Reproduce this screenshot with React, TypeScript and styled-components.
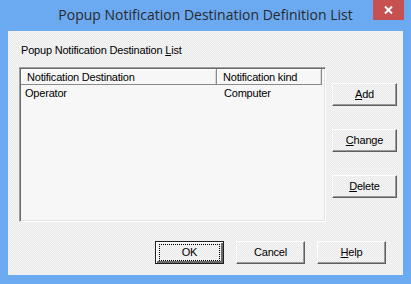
import React from "react";
import styled, { createGlobalStyle, css } from "styled-components";

const Global = createGlobalStyle`
  html, body { margin: 0; padding: 0; }
  body { width: 411px; height: 284px; overflow: hidden; background: #6ba9f1; }
`;

const dither = css`
  background-color: #f0f0f0;
  background-image: repeating-conic-gradient(#f5f5f5 0 25%, #eaeaea 0 50%);
  background-size: 2px 2px;
`;

const uiFont = css`
  font-family: "Liberation Sans", Arial, sans-serif;
  font-size: 11px;
  letter-spacing: -0.2px;
  color: #000;
`;

const Window = styled.div`
  width: 411px;
  height: 284px;
  box-sizing: border-box;
  background: #6ba9f1;
  display: flex;
  flex-direction: column;
  padding: 0 8px 9px 8px;
`;

const TitleBar = styled.div`
  height: 31px;
  margin: 0 -8px;
  display: grid;
  grid-template-columns: 1fr auto 1fr;
`;

const Title = styled.div`
  grid-column: 2;
  font-family: "Open Sans", "Noto Sans", sans-serif;
  font-size: 14px;
  line-height: 20px;
  padding-top: 5px;
  color: #2a2a2a;
  white-space: nowrap;
`;

const CloseButton = styled.div`
  grid-column: 3;
  justify-self: end;
  align-self: start;
  width: 31px;
  height: 20px;
  margin-right: 7px;
  background: #c75050;
  display: flex;
  align-items: center;
  justify-content: center;
`;

const Client = styled.div`
  flex: 1;
  ${dither};
  display: flex;
  flex-direction: column;
  padding: 13px 6px 11px 11px;
`;

const GroupLabel = styled.div`
  ${uiFont};
  line-height: 13px;
  margin: 0 0 10px 2px;
`;

const Key = styled.span`
  text-decoration: underline;
  text-underline-offset: 1px;
`;

const MainRow = styled.div`
  display: flex;
  gap: 6px;
  height: 155px;
`;

const ListBox = styled.div`
  width: 307px;
  height: 155px;
  box-sizing: border-box;
  border: 1px solid;
  border-color: #a0a0a0 #ffffff #ffffff #a0a0a0;
  box-shadow: inset 1px 1px #696969, inset -1px -1px #e3e3e3;
  background: #f7f7f7;
  padding: 1px;
`;

const Columns = styled.div`
  display: grid;
  grid-template-columns: 196px 105px;
`;

const HeaderCell = styled.div`
  ${uiFont};
  height: 16px;
  box-sizing: border-box;
  line-height: 15px;
  padding: 1px 0 0 6px;
  border-right: 1px solid #8a8a8a;
  border-bottom: 1px solid #8a8a8a;
  box-shadow: inset 1px 1px #ffffff, inset -1px 0 #d8d8d8;
  white-space: nowrap;
`;

const Cell = styled.div<{ $pad: number }>`
  ${uiFont};
  height: 15px;
  line-height: 15px;
  padding: 1px 0 0 ${(p) => p.$pad}px;
  white-space: nowrap;
`;

const SideButtons = styled.div`
  display: flex;
  flex-direction: column;
  gap: 23px;
  padding-top: 16px;
`;

const Button = styled.button<{ $w: number; $default?: boolean }>`
  ${uiFont};
  ${dither};
  width: ${(p) => p.$w}px;
  height: 23px;
  box-sizing: border-box;
  padding: 0;
  margin: 0;
  position: relative;
  border: 1px solid;
  border-color: ${(p) =>
    p.$default ? "#1e1e1e" : "#ffffff #5f5f5f #5f5f5f #ffffff"};
  box-shadow: ${(p) =>
    p.$default
      ? "inset 1px 1px #ffffff, inset -2px -2px #6a6a6a"
      : "inset -1px -1px #9a9a9a"};
  display: flex;
  align-items: center;
  justify-content: center;
  line-height: 13px;
  cursor: default;
`;

const FocusRect = styled.span`
  position: absolute;
  left: 3px;
  top: 2px;
  right: 3px;
  bottom: 2px;
  border: 1px dotted #000;
  pointer-events: none;
`;

const BottomRow = styled.div`
  display: flex;
  justify-content: flex-end;
  gap: 12px;
  margin-top: 19px;
  padding-right: 11px;
`;

export default function App() {
  return (
    <>
      <Global />
      <Window>
        <TitleBar>
          <Title>Popup Notification Destination Definition List</Title>
          <CloseButton>
            <svg width="9" height="8" viewBox="0 0 9 8">
              <path d="M1 0.5 L8 7.5 M8 0.5 L1 7.5" stroke="#fff" strokeWidth="2" />
            </svg>
          </CloseButton>
        </TitleBar>
        <Client>
          <GroupLabel>
            Popup Notification Destination <Key>L</Key>ist
          </GroupLabel>
          <MainRow>
            <ListBox>
              <Columns>
                <HeaderCell>Notification Destination</HeaderCell>
                <HeaderCell>Notification kind</HeaderCell>
                <Cell $pad={4}>Operator</Cell>
                <Cell $pad={7}>Computer</Cell>
              </Columns>
            </ListBox>
            <SideButtons>
              <Button $w={65}>
                <span>
                  <Key>A</Key>dd
                </span>
              </Button>
              <Button $w={65}>
                <span>
                  <Key>C</Key>hange
                </span>
              </Button>
              <Button $w={65}>
                <span>
                  <Key>D</Key>elete
                </span>
              </Button>
            </SideButtons>
          </MainRow>
          <BottomRow>
            <Button $w={69} $default>
              <FocusRect />
              OK
            </Button>
            <Button $w={69}>Cancel</Button>
            <Button $w={69}>
              <span>
                <Key>H</Key>elp
              </span>
            </Button>
          </BottomRow>
        </Client>
      </Window>
    </>
  );
}
